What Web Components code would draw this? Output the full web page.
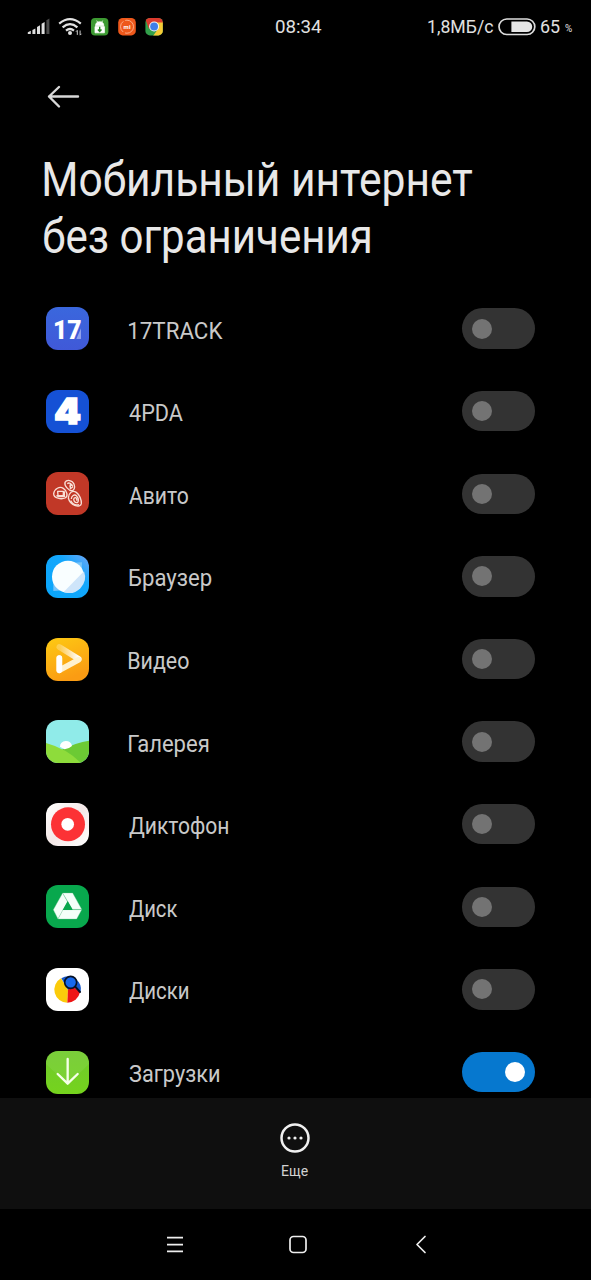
<!DOCTYPE html>
<html lang="ru">
<head>
<meta charset="utf-8">
<title>Мобильный интернет без ограничения</title>
<style>
  body {
    margin: 0;
    background: #000;
    color: #e8e8e8;
    font-family: Roboto, "Liberation Sans", sans-serif;
  }
</style>
</head>
<body>
<data-usage-screen></data-usage-screen>

<script>
// Small helper: every component renders static markup into an open root
class BaseElement extends HTMLElement {
  constructor() {
    super();
    this.attachShadow({ mode: 'open' });
  }

  connectedCallback() {
    this.render();
  }
}

// Text squeezed to a given ink width, the glyphs start at the left edge of the box
class FitText extends BaseElement {
  render() {
    this.shadowRoot.innerHTML = `
      <style>
        :host { display: block; flex: none; white-space: nowrap; }
        span { display: inline-block; transform-origin: 0 50%; }
      </style>
      <span></span>
    `;
    const width = Number(this.getAttribute('width'));
    const text = this.getAttribute('text');
    const span = this.shadowRoot.querySelector('span');
    span.textContent = text;
    this.style.width = `${width}px`;

    const style = getComputedStyle(this);
    const ctx = document.createElement('canvas').getContext('2d');
    ctx.font = `${style.fontWeight} ${style.fontSize} ${style.fontFamily}`;
    const box = ctx.measureText(text);
    const scale = width / (box.actualBoundingBoxLeft + box.actualBoundingBoxRight);
    span.style.transform = `translateX(${box.actualBoundingBoxLeft * scale}px) scaleX(${scale})`;
  }
}
customElements.define('fit-text', FitText);

class StatusBar extends BaseElement {
  render() {
    this.shadowRoot.innerHTML = `
      <style>
        :host {
          display: flex;
          align-items: center;
          justify-content: space-between;
          height: 53px;
          padding: 0 19px 0 27px;
          box-sizing: border-box;
          font-size: 18px;
          line-height: 20px;
          color: #e0e0e0;
        }
        svg { display: block; flex: none; }
        .left, .right { display: flex; align-items: center; }
        .left { width: 249px; }
        .right { flex: 1; justify-content: flex-end; }
        .battery { margin: 0 5px 0 4.5px; }
        .percent { font-size: 10.5px; padding-top: 5px; margin-left: 5px; }
      </style>
      <div class="left">
        <svg width="136" height="20" viewBox="0 0 136 20">
          <g fill="#dedede">
            <path d="M.8 17v-1.700l3-1.600V17z"/>
            <path d="M5.400 17v-4l3-1.600V17z"/>
            <path d="M10 17V9.900l3-1.600V17z"/>
            <path d="M14.600 17V6.800l3-1.700V17z"/>
          </g>
          <path d="M19.400 17V3.200l3-1.800V17z" fill="#4a4a4a"/>
          <g fill="none" stroke="#e2e2e2" stroke-width="2.2">
            <path d="M32.2 6.600Q43-2.400 53.800 6.600M35.600 10.300Q43 4 50.400 10.300M39 13.700Q43 10.300 47 13.700"/>
          </g>
          <circle cx="43" cy="16" r="2" fill="#e2e2e2"/>
          <path d="M50.300 13.500v4.400m-1.300-3.200 1.300-1.400M53.100 13.500v4.400m0 .3 1.300-1.400" stroke="#ccc" fill="none"/>
          <rect x="64" y="1" width="17.400" height="17.400" rx="4" fill="#3d9a32"/>
          <path d="M68 9.600h9.400v6.200H68zM68.600 8.800a4.100 4 0 0 1 8.200 0zM69.700 3.600l1 1.700M75.700 3.600l-1 1.700" fill="#fff" stroke="#fff" stroke-width=".8"/>
          <path d="M72.700 9.800v4.200m-1.800-1.500 1.800 2 1.800-2" fill="none" stroke="#278522" stroke-width="1.400"/>
          <rect x="91.200" y="1" width="17.600" height="17.400" rx="4.500" fill="#ee581b"/>
          <circle cx="100" cy="9.700" r="6.500" fill="none" stroke="#ffc2a2" stroke-width=".8" stroke-dasharray="12 2"/>
          <text x="96.600" y="11.700" font-size="6" font-weight="700" fill="#fff" textLength="7">mi</text>
          <clipPath id="c"><rect x="118.400" y="1" width="17.400" height="17.400" rx="4.500"/></clipPath>
          <g clip-path="url(#c)">
            <path d="M118 1h18v18h-18z" fill="#32a04b"/>
            <path d="M117.500 0H136v6h-9l-5 6z" fill="#dc3a2d"/>
            <path d="M127 5.500h10V19h-11l5-7z" fill="#f7ca35"/>
          </g>
          <circle cx="127.100" cy="9.500" r="5" fill="#f4f4f4"/>
          <circle cx="127.100" cy="9.500" r="3.900" fill="#3f7ee8"/>
        </svg>
      </div>
      <fit-text text="08:34" width="45.5"></fit-text>
      <div class="right">
        <fit-text text="1,8МБ/с" width="65"></fit-text>
        <svg class="battery" width="38" height="18" viewBox="0 0 38 18">
          <rect x="1" y="1" width="35.800" height="15.500" rx="7.750" fill="none" stroke="#ddd" stroke-width="1.700"/>
          <path d="M13.400 3.400h15.500a5.350 5.350 0 0 1 0 10.700H13.400z" fill="#e6e6e6"/>
        </svg>
        <fit-text text="65" width="19"></fit-text>
        <fit-text class="percent" text="%" width="7.5"></fit-text>
      </div>
    `;
  }
}
customElements.define('status-bar', StatusBar);

const ICONS = {
  track: `
    <linearGradient id="g" x2="0" y2="1"><stop stop-color="#3a67dd"/><stop offset="1" stop-color="#4059d8"/></linearGradient>
    <path d="M0 0h129v129H0z" fill="url(#g)"/>
    <path d="M91 96l14-32v32z" fill="#8fa1ee"/>
    <text x="21" y="96" font-size="80" font-weight="900" textLength="86" lengthAdjust="spacingAndGlyphs" fill="#fff">17</text>`,
  pda: `
    <path d="M0 0h129v129H0z" fill="#1551d5"/>
    <text x="25" y="103" font-family="Inter" font-size="105" font-weight="900" textLength="80" lengthAdjust="spacingAndGlyphs" fill="#fff" stroke="#fff" stroke-width="5">4</text>`,
  avito: `
    <path d="M0 0h129v129H0z" fill="#c13827"/>
    <g fill="none" stroke="#f8ded5" stroke-width="4" stroke-linejoin="round">
      <path d="M57 31c5-9 22-7 27 5 4 11 0 20-7 20-8 0-23-14-20-25z"/>
      <path d="M23 65c2-15 18-23 29-16 12 8 15 24 5 29-11 5-34 1-34-13z"/>
      <path d="M67 78c1-15 12-25 24-17 10 7 16 24 15 34-2 13-33 8-39-17z"/>
      <path d="M64 35c5-5 15 1 16 8M70 43l9-5M73 36v14l8-6"/>
      <path d="M35 58h17v13H36zM31 71l7 3h17V58"/>
      <path d="M76 81c0-9 9-16 16-9 7 8 6 18 2 20-8 1-14-9-9-14 4-4 9 2 7 8M74 86c5 10 15 15 25 12"/>
    </g>`,
  browser: `
    <linearGradient id="g" x1="0" y1="1" x2="1" y2="0"><stop stop-color="#08a6fb"/><stop offset=".65" stop-color="#14a7fc"/><stop offset="1" stop-color="#70a7f8"/></linearGradient>
    <path d="M0 0h129v129H0z" fill="url(#g)"/>
    <path d="M22 108V76l32 30zM108 22L75 23l32 30z" fill="#77c5fb"/>
    <circle cx="66" cy="65" r="48" fill="#f9feff"/>
    <path d="M114 49A48 48 0 0 1 53 111z" fill="#cee5fa"/>`,
  video: `
    <linearGradient id="g" x2=".4" y2="1"><stop stop-color="#fdca13"/><stop offset="1" stop-color="#fb9c13"/></linearGradient>
    <linearGradient id="a"><stop stop-color="#fff" stop-opacity=".25"/><stop offset="1" stop-color="#fff"/></linearGradient>
    <path d="M0 0h129v129H0z" fill="url(#g)"/>
    <g fill="none" stroke-width="17" stroke-linecap="round" stroke-linejoin="round">
      <path d="M40 27L98 63" stroke="url(#a)"/>
      <path d="M40 60V97L98 65" stroke="#fff2cf"/>
      <path d="M40 60V97" stroke="#fff"/>
    </g>`,
  gallery: `
    <path d="M0 0h129v129H0z" fill="#90ebe9"/>
    <path d="M44 91Q91 67 129 62v67H44z" fill="#6cca34"/>
    <path d="M0 69Q63 86 105 129H0z" fill="#8edc3b"/>
    <path d="M42 80a18 16 0 0 1 36-2q-10 9-22 10-8-4-14-8z" fill="#fff"/>`,
  recorder: `
    <linearGradient id="g" x2="1" y2="1"><stop stop-color="#fff"/><stop offset=".5" stop-color="#f4e9e8"/><stop offset="1" stop-color="#fff"/></linearGradient>
    <path d="M0 0h129v129H0z" fill="url(#g)"/>
    <circle cx="66" cy="64" r="51" fill="#fc3235"/>
    <circle cx="65" cy="64" r="19" fill="#fff"/>`,
  drive: `
    <path d="M0 0h129v129H0z" fill="#08a84d"/>
    <g fill="#f5fff9" stroke="#7cc69b" stroke-width="1">
      <path d="M50 24L22 74l14 28 29-51z"/>
      <path d="M50 24h30l27 49H79z"/>
      <path d="M36 102l15-28h56l-15 28z"/>
    </g>
    <path d="M65 48L50 75h30z" fill="#08a84d"/>`,
  disks: `
    <path d="M0 0h129v129H0z" fill="#fff"/>
    <path d="M66 65L45 31A39 39 0 0 0 64 104z" fill="#fbcb0b"/>
    <path d="M66 64l-2 40a39 39 0 0 0 38-31L82 54z" fill="#ee1515"/>
    <path d="M66 65L46 31a39 39 0 0 1 58 41L80 55z" fill="#1758c9"/>
    <path d="M87 55l15 17" stroke="#071124" stroke-width="6" stroke-linecap="round"/>
    <circle cx="74" cy="43" r="18" fill="#1769ee" stroke="#071124" stroke-width="5"/>`,
  downloads: `
    <linearGradient id="g" x2="0" y2="1"><stop stop-color="#70ca2e"/><stop offset="1" stop-color="#75d31d"/></linearGradient>
    <path d="M0 0h129v129H0z" fill="url(#g)"/>
    <path d="M0 39l65 62 64-62V0H0z" fill="#91d85a" opacity=".3"/>
    <path d="M65 24v73M35 69l30 29 30-29" fill="none" stroke="#f6ffe8" stroke-width="7" stroke-linecap="round" stroke-linejoin="round"/>`
};

class AppIcon extends BaseElement {
  render() {
    this.shadowRoot.innerHTML = `
      <style>
        :host { display: block; flex: none; width: 43px; height: 43px; border-radius: 12px; overflow: hidden; }
        svg { display: block; }
      </style>
      <svg width="43" height="43" viewBox="0 0 129 129">${ICONS[this.getAttribute('name')]}</svg>
    `;
  }
}
customElements.define('app-icon', AppIcon);

class ToggleSwitch extends BaseElement {
  render() {
    this.shadowRoot.innerHTML = `
      <style>
        :host {
          display: flex;
          align-items: center;
          flex: none;
          box-sizing: border-box;
          width: 73px;
          height: 40.4px;
          padding: 0 10px;
          border-radius: 21px;
          background: #333;
        }
        i { width: 20px; height: 20px; border-radius: 50%; background: #737373; }
        :host([checked]) { background: #0678cf; justify-content: flex-end; }
        :host([checked]) i { background: #fff; }
      </style>
      <i></i>
    `;
  }
}
customElements.define('toggle-switch', ToggleSwitch);

class AppRow extends BaseElement {
  render() {
    this.shadowRoot.innerHTML = `
      <style>
        :host {
          display: flex;
          align-items: center;
          height: 82.6px;
          padding: 0 56px 0 46px;
          font-size: 24.5px;
          line-height: 30px;
          color: #c9c9c9;
        }
        .label { flex: 1; padding: 4px 0 0 40px; }
      </style>
      <slot name="icon"></slot>
      <div class="label"><slot></slot></div>
      <toggle-switch ${this.hasAttribute('checked') ? 'checked' : ''}></toggle-switch>
    `;
  }
}
customElements.define('app-row', AppRow);

class BottomAction extends BaseElement {
  render() {
    this.shadowRoot.innerHTML = `
      <style>
        :host {
          display: flex;
          flex-direction: column;
          align-items: center;
          gap: 8px;
          height: 111px;
          padding: 24px 1px 0 0;
          box-sizing: border-box;
          background: #0f0f0f;
          font-size: 15.5px;
          line-height: 18px;
          color: #d2d2d2;
        }
      </style>
      <svg width="32" height="32" viewBox="0 0 32 32">
        <circle cx="16" cy="16" r="13.500" fill="none" stroke="#f0f0f0" stroke-width="2.500"/>
        <g fill="#f0f0f0"><circle cx="10" cy="16" r="1.600"/><circle cx="16" cy="16" r="1.600"/><circle cx="22" cy="16" r="1.600"/></g>
      </svg>
      <slot></slot>
    `;
  }
}
customElements.define('bottom-action', BottomAction);

class NavBar extends BaseElement {
  render() {
    this.shadowRoot.innerHTML = `
      <style>
        :host {
          display: flex;
          align-items: center;
          justify-content: space-between;
          height: 71px;
          padding: 0 161px 0 165px;
        }
        svg { fill: none; stroke: #eee; stroke-width: 1.7; stroke-linecap: round; stroke-linejoin: round; }
      </style>
      <svg width="20" height="20" viewBox="0 0 20 20"><path d="M2 2.700h16M2 9.700h16M2 16.300h16" stroke-linecap="butt"/></svg>
      <svg width="20" height="20" viewBox="0 0 20 20"><rect x="2" y="1.500" width="16" height="16" rx="3.500"/></svg>
      <svg width="20" height="20" viewBox="0 0 20 20"><path d="M15 1.500L7 9.500l8 8"/></svg>
    `;
  }
}
customElements.define('nav-bar', NavBar);

// [icon, label, ink width, enabled]
const APPS = [
  ['track', '17TRACK', 94],
  ['pda', '4PDA', 54],
  ['avito', 'Авито', 59],
  ['browser', 'Браузер', 82.5],
  ['video', 'Видео', 59.5],
  ['gallery', 'Галерея', 79.5],
  ['recorder', 'Диктофон', 99.5],
  ['drive', 'Диск', 49],
  ['disks', 'Диски', 59.5],
  ['downloads', 'Загрузки', 90.5, true]
];

class DataUsageScreen extends BaseElement {
  render() {
    this.shadowRoot.innerHTML = `
      <style>
        :host { display: flex; flex-direction: column; height: 1280px; width: 591px; overflow: hidden; }
        .back { display: block; margin: 31px 0 0 46px; flex: none; }
        h1 {
          margin: 42px 0 0 44px;
          font-size: 47.5px;
          font-weight: 400;
          line-height: 57px;
          color: #e8e8e8;
        }
        main { flex: 1; min-height: 0; overflow: hidden; padding-top: 21.4px; }
      </style>
      <status-bar></status-bar>
      <svg class="back" width="36" height="26" viewBox="0 0 36 26">
        <path d="M32 12.500H3M13 3L3 12.500 13 22.500" fill="none" stroke="#d8d8d8" stroke-width="2.400" stroke-linecap="round" stroke-linejoin="round"/>
      </svg>
      <h1>
        <fit-text text="Мобильный интернет" width="428"></fit-text>
        <fit-text text="без ограничения" width="326"></fit-text>
      </h1>
      <main>
        ${APPS.map(([icon, label, width, on]) => `
          <app-row ${on ? 'checked' : ''}>
            <app-icon slot="icon" name="${icon}"></app-icon>
            <fit-text text="${label}" width="${width}"></fit-text>
          </app-row>
        `).join('')}
      </main>
      <bottom-action><fit-text text="Еще" width="26"></fit-text></bottom-action>
      <nav-bar></nav-bar>
    `;
  }
}
customElements.define('data-usage-screen', DataUsageScreen);
</script>
</body>
</html>
